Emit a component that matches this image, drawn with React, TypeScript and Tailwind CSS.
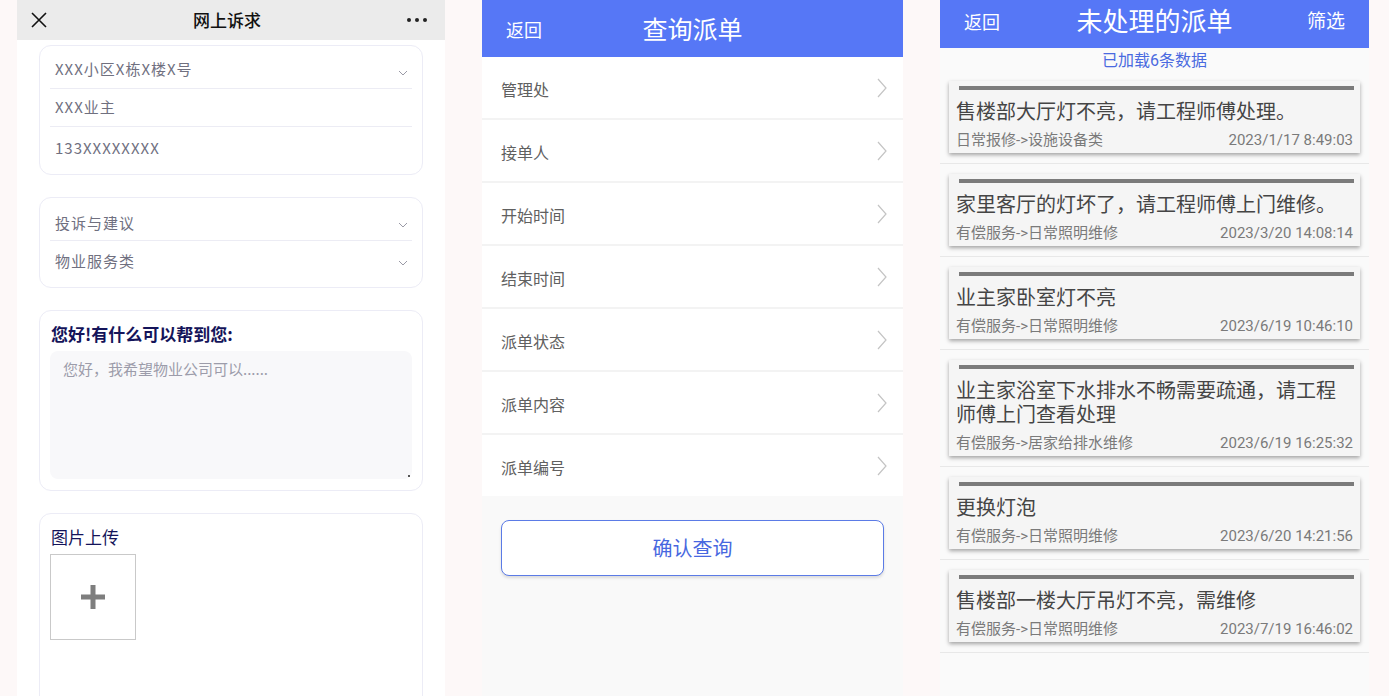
import React from "react";

const CJK = "font-['Noto_Sans_CJK_SC','Noto_Sans',sans-serif]";
const ANDROID = "font-['Roboto','Noto_Sans_CJK_SC',sans-serif]";

const queryFields = ["管理处", "接单人", "开始时间", "结束时间", "派单状态", "派单内容", "派单编号"];

const orders = [
  { title: "售楼部大厅灯不亮，请工程师傅处理。", type: "日常报修->设施设备类", time: "2023/1/17 8:49:03" },
  { title: "家里客厅的灯坏了，请工程师傅上门维修。", type: "有偿服务->日常照明维修", time: "2023/3/20 14:08:14" },
  { title: "业主家卧室灯不亮", type: "有偿服务->日常照明维修", time: "2023/6/19 10:46:10" },
  { title: "业主家浴室下水排水不畅需要疏通，请工程师傅上门查看处理", type: "有偿服务->居家给排水维修", time: "2023/6/19 16:25:32" },
  { title: "更换灯泡", type: "有偿服务->日常照明维修", time: "2023/6/20 14:21:56" },
  { title: "售楼部一楼大厅吊灯不亮，需维修", type: "有偿服务->日常照明维修", time: "2023/7/19 16:46:02" },
];

function SmallChevron() {
  return (
    <svg width="10" height="6" viewBox="0 0 10 6" className="mt-[6px] mr-[4px]">
      <polyline points="1,1 5,5 9,1" fill="none" stroke="#9a9aa6" strokeWidth="1" />
    </svg>
  );
}

function RightChevron() {
  return (
    <svg width="10" height="20" viewBox="0 0 10 20">
      <polyline points="1,1 9,10 1,19" fill="none" stroke="#c4c4c4" strokeWidth="1.2" />
    </svg>
  );
}

function FormRow({ text, chevron, last, h, offset }: { text: string; chevron?: boolean; last?: boolean; h: string; offset: string }) {
  return (
    <div className={`${h} flex items-center justify-between pl-[5px] ${last ? "" : "border-b border-[#ececf4]"}`}>
      <span className={`${offset} text-[15px] tracking-[1px] text-[#70707f]`}>{text}</span>
      {chevron && <SmallChevron />}
    </div>
  );
}

function ComplaintPanel() {
  return (
    <div className={`w-[428px] ml-[17px] h-full bg-white flex flex-col ${CJK}`}>
      <div className="h-[40px] bg-[#ebebeb] flex items-center justify-between px-[14px] shrink-0">
        <svg width="16" height="16" viewBox="0 0 16 16">
          <path d="M1 1 L15 15 M15 1 L1 15" stroke="#111" strokeWidth="1.6" />
        </svg>
        <span className="text-[17px] font-medium text-[#111]">网上诉求</span>
        <div className="flex gap-[4px] pr-[4px]">
          <span className="w-[4px] h-[4px] rounded-full bg-[#222]" />
          <span className="w-[4px] h-[4px] rounded-full bg-[#222]" />
          <span className="w-[4px] h-[4px] rounded-full bg-[#222]" />
        </div>
      </div>

      <div className="px-[22px] pt-[5px] flex flex-col gap-[22px]">
        <div className="rounded-[12px] border border-[#ececf6] px-[10px] pt-[5px] pb-[9px]">
          <FormRow text="XXX小区X栋X楼X号" chevron h="h-[38px]" offset="pt-[0px]" />
          <FormRow text="XXX业主" h="h-[38px]" offset="pt-[0px]" />
          <FormRow text="133XXXXXXXX" last h="h-[38px]" offset="pt-[4px]" />
        </div>

        <div className="rounded-[12px] border border-[#ececf6] px-[10px] pt-[6px] pb-[9px]">
          <FormRow text="投诉与建议" chevron h="h-[37px]" offset="pt-[3px]" />
          <FormRow text="物业服务类" chevron last h="h-[37px]" offset="pt-[3px]" />
        </div>

        <div className="rounded-[12px] border border-[#ececf6] px-[10px] pt-[12px] pb-[11px]">
          <div className="text-[17px] leading-[22px] font-semibold text-[#14145a] pl-[1px]">您好!有什么可以帮到您:</div>
          <div className="relative mt-[6px] h-[128px] rounded-[8px] bg-[#f8f8fa] px-[13px] pt-[5px]">
            <span className="text-[15px] text-[#9c9caa]">您好，我希望物业公司可以......</span>
            <span className="absolute right-[2px] bottom-[2px] w-[2px] h-[2px] bg-[#555]" />
          </div>
        </div>

        <div className="h-[260px] rounded-[12px] border border-[#ececf6] px-[10px] pt-[12px]">
          <div className="text-[17px] leading-[22px] text-[#14145a] pl-[1px]">图片上传</div>
          <div className="mt-[6px] w-[86px] h-[86px] border border-[#c9c9c9] flex items-center justify-center">
            <svg width="26" height="26" viewBox="0 0 26 26">
              <path d="M13 1 V25 M1 13 H25" stroke="#7e7e7e" strokeWidth="5" />
            </svg>
          </div>
        </div>
      </div>
    </div>
  );
}

function QueryPanel() {
  return (
    <div className={`w-[421px] ml-[37px] h-full bg-[#f9f9f9] flex flex-col ${CJK}`}>
      <div className="h-[57px] bg-[#5677f6] relative flex items-center justify-center shrink-0">
        <span className="absolute left-[24px] top-[16px] text-[18px] text-white">返回</span>
        <span className="text-[25px] text-white">查询派单</span>
      </div>
      <div className="flex flex-col gap-[2px] bg-[#f3f3f3]">
        {queryFields.map((f) => (
          <div key={f} className="h-[61px] bg-white flex items-center justify-between pl-[19px] pr-[16px]">
            <span className="text-[16px] text-[#606060] pt-[3px]">{f}</span>
            <RightChevron />
          </div>
        ))}
      </div>
      <div className="px-[19px] pt-[24px]">
        <button className="w-full h-[56px] rounded-[8px] border-[1.5px] border-[#5b7be6] bg-white shadow-[0_2px_3px_rgba(0,0,0,0.12)] text-[20px] text-[#4767e0]">
          确认查询
        </button>
      </div>
    </div>
  );
}

function OrderCard({ title, type, time }: { title: string; type: string; time: string }) {
  return (
    <div className="ml-[9px] mr-[9px] bg-[#f5f5f5] shadow-[0_2px_4px_rgba(0,0,0,0.35)] pt-[5px] pb-[3px] pl-[7px] pr-[7px]">
      <div className="h-[4px] bg-[#7b7b7b] ml-[3px] mr-[-1px]" />
      <div className="mt-[10px] text-[20px] leading-[24px] text-[#454545] pr-[2px]">{title}</div>
      <div className="mt-[6px] h-[20px] flex items-center justify-between text-[15px] text-[#7a7a7a]">
        <span>{type}</span>
        <span>{time}</span>
      </div>
    </div>
  );
}

function PendingPanel() {
  return (
    <div className={`w-[429px] ml-[37px] h-full bg-[#fafafa] flex flex-col ${ANDROID}`}>
      <div className="h-[48px] bg-[#5677f6] relative flex items-center justify-center shrink-0">
        <span className="absolute left-[24px] top-[9px] text-[18px] text-white">返回</span>
        <span className="text-[26px] text-white pb-[4px]">未处理的派单</span>
        <span className="absolute right-[24px] top-[8px] text-[19px] text-white">筛选</span>
      </div>
      <div className="h-[23px] pt-[3px] leading-[20px] text-center text-[16px] text-[#4a6ae0]">已加载6条数据</div>
      <div className="flex flex-col">
        {orders.map((o) => (
          <div key={o.time} className="py-[10px] border-b border-[#e8e8e8]">
            <OrderCard {...o} />
          </div>
        ))}
      </div>
    </div>
  );
}

export default function App() {
  return (
    <div className="w-[1389px] h-[696px] overflow-hidden bg-[#fdf8f8] flex">
      <ComplaintPanel />
      <QueryPanel />
      <PendingPanel />
    </div>
  );
}
